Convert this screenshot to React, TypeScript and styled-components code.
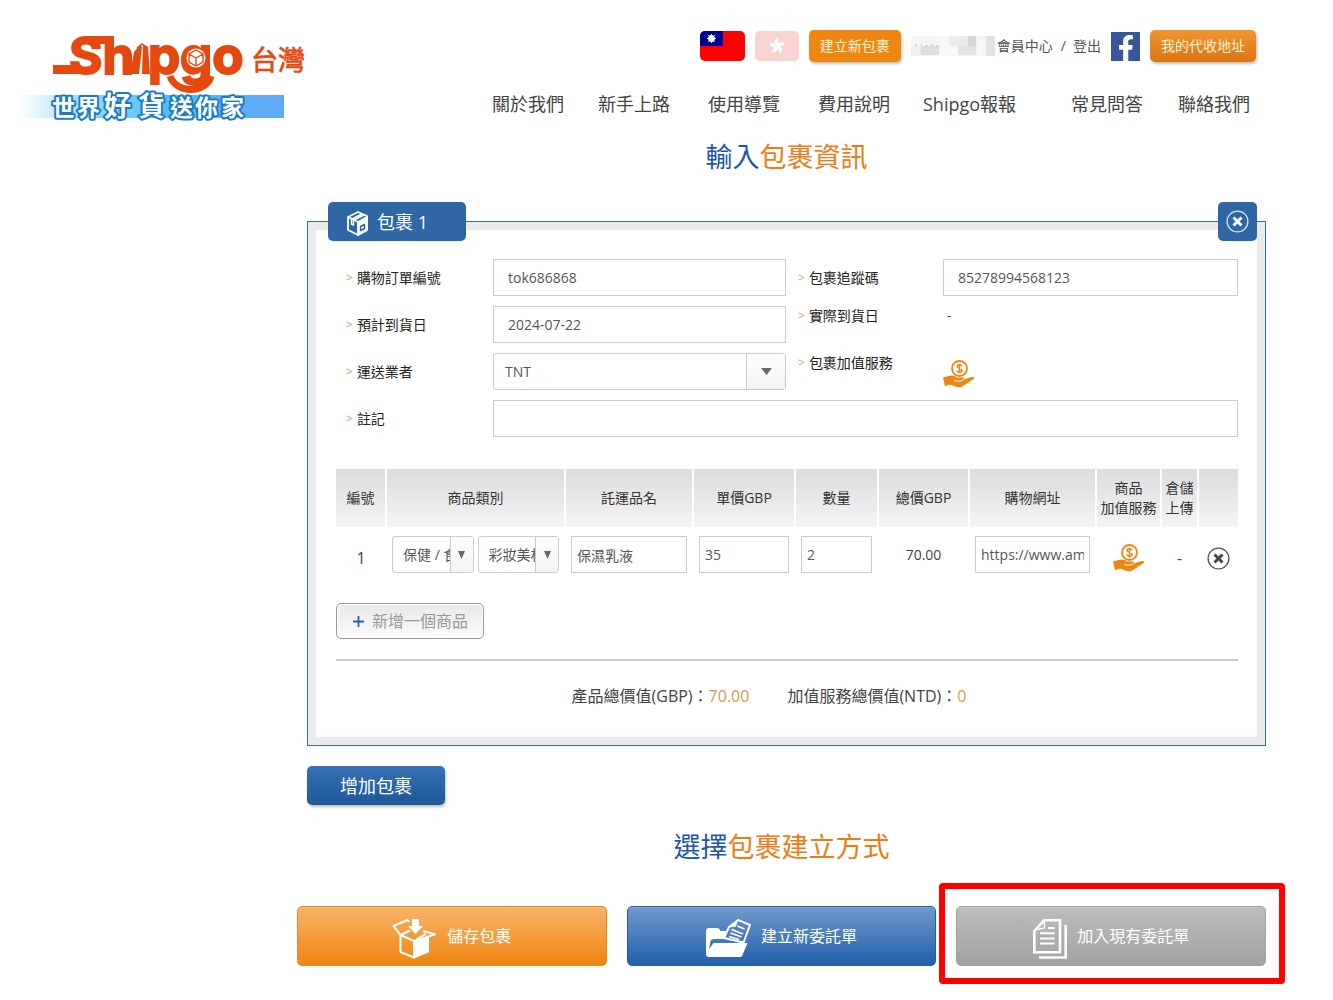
import React from "react";
import styled, { createGlobalStyle, css } from "styled-components";
import { FaFacebookF } from "react-icons/fa";

const GlobalStyle = createGlobalStyle`
  *, *::before, *::after { box-sizing: border-box; }
  body {
    margin: 0;
    background: #fff;
    color: #444;
    font-family: "Open Sans", "Noto Sans CJK TC", sans-serif;
    font-size: 14px;
    line-height: 20px;
  }
  button, input, select { font: inherit; margin: 0; }
  button { cursor: pointer; }
  a { color: inherit; text-decoration: none; }
  svg { display: block; }
`;

/* ---------- header ---------- */

const Header = styled.header`
  display: flex;
  align-items: flex-start;
  padding: 16px 77px 0 16px;
`;

const LogoLink = styled.a`
  flex: none;
`;

const HeaderSide = styled.div`
  flex: 1;
  display: flex;
  flex-direction: column;
  align-items: flex-end;
  gap: 30px;
  padding-top: 14px;
`;

const UserBar = styled.div`
  display: flex;
  align-items: center;
  gap: 10px;
  height: 32px;
`;

const FlagButton = styled.button`
  padding: 0;
  border: 0;
  background: none;
  border-radius: 5px;
  overflow: hidden;
`;

const PillLink = styled.a<{ $shaded?: boolean }>`
  padding: 6px 11px;
  border-radius: 5px;
  color: #fff4d8;
  background: ${(p) =>
    p.$shaded ? "linear-gradient(#ee9530, #da7612)" : "#ee8712"};
  box-shadow: 1px 2px 3px rgba(0, 0, 0, 0.25);
`;

const Account = styled.div`
  display: flex;
  align-items: center;
  color: #555;
`;

const AccountLink = styled.a`
  margin-left: 2px;
`;

const Slash = styled.span`
  padding: 0 5px 0 8px;
`;

const FacebookLink = styled.a`
  display: flex;
  align-items: flex-end;
  justify-content: flex-end;
  width: 29px;
  height: 29px;
  padding-right: 1px;
  overflow: hidden;
  color: #fff;
  background: #38569c;
`;

const Nav = styled.nav`
  display: grid;
  grid-template-columns: 106fr 110fr 110fr 105fr 148fr 107fr 72fr;
  width: 100%;
  max-width: 758px;
  margin-right: 6px;
  font-size: 18px;
  line-height: 24px;
  white-space: nowrap;
`;

/* ---------- main ---------- */

const Main = styled.main`
  margin: 0 67px 0 307px;
  padding-bottom: 30px;
`;

const Title = styled.h1`
  margin: 0;
  padding: 11px 0 44px;
  color: #1d57a5;
  font-size: 27px;
  font-weight: 400;
  line-height: 40px;
  text-align: center;
`;

const SubTitle = styled(Title).attrs({ as: "h2" })`
  padding: 22px 10px 39px 0;
`;

const Accent = styled.span`
  color: #ee7c14;
`;

const Panel = styled.section`
  position: relative;
  border: 1px solid #3070a8;
  background: #ebebec;
  padding: 8px;
`;

const PanelBody = styled.div`
  padding: 29px 19px 29px 20px;
  background: #fff;
`;

const tabLook = css`
  position: absolute;
  top: -20px;
  height: 39px;
  border-radius: 5px;
  color: #fff;
  background: #2e67a4;
`;

const PanelTab = styled.h3`
  ${tabLook}
  left: 20px;
  display: flex;
  align-items: center;
  gap: 9px;
  width: 138px;
  margin: 0;
  padding-left: 19px;
  font-size: 18px;
  font-weight: 400;

  svg { margin-top: 4px; }
`;

const PanelClose = styled.button`
  ${tabLook}
  right: 8px;
  display: grid;
  place-items: center;
  width: 39px;
  padding: 0;
  border: 0;
`;

const Fields = styled.div`
  display: grid;
  grid-template-columns: 147px 293fr 157px 295fr;
  grid-auto-rows: 37px;
  row-gap: 10px;
  align-items: center;
  margin-left: 10px;
`;

const labelLook = css<{ $second?: boolean; $top?: boolean }>`
  display: flex;
  gap: 4px;
  padding-left: ${(p) => (p.$second ? "12px" : "0")};
  align-self: ${(p) => (p.$top ? "start" : "center")};
  color: #222;

  &::before {
    content: ">";
    color: #d3a467;
    font-size: 12px;
  }
`;

const Label = styled.label<{ $second?: boolean; $top?: boolean }>`
  ${labelLook}
`;

const Caption = styled.div<{ $second?: boolean; $top?: boolean }>`
  ${labelLook}
`;

const TextBox = styled.input<{ $compact?: boolean; $wide?: boolean }>`
  width: 100%;
  height: 37px;
  padding: ${(p) => (p.$compact ? "0 5px" : "0 14px")};
  border: 1px solid #ccc;
  border-radius: 0;
  color: #555;
  background: #fff;
  outline: none;
  ${(p) => p.$wide && "grid-column: 2 / -1;"}
`;

const Plain = styled.div`
  align-self: start;
  padding-left: 4px;
`;

const IconButton = styled.button`
  align-self: start;
  justify-self: start;
  display: inline-block;
  vertical-align: middle;
  padding: 7px 0 0;
  border: 0;
  background: none;
`;

const SelectBox = styled.div<{ $compact?: boolean }>`
  position: relative;
  flex: 1;
  min-width: 0;
  height: 37px;
  border: 1px solid #ccc;
  border-radius: 3px;

  select {
    appearance: none;
    width: 100%;
    height: 100%;
    padding: ${(p) => (p.$compact ? "0 23px 0 10px" : "0 39px 0 11px")};
    border: 0;
    color: #555;
    background: none;
    outline: none;
    text-overflow: clip;
  }
`;

const SelectArrow = styled.span<{ $compact?: boolean }>`
  position: absolute;
  top: 0;
  right: 0;
  bottom: 0;
  display: grid;
  place-items: center;
  width: ${(p) => (p.$compact ? "23px" : "39px")};
  border-left: 1px solid #ccc;
  background: linear-gradient(#fff, #f3f3f3);
  pointer-events: none;
`;

const SelectPair = styled.div`
  display: flex;
  gap: 4px;
`;

const Items = styled.table`
  width: 100%;
  margin-top: 32px;
  border-collapse: collapse;
  table-layout: fixed;

  th {
    height: 58px;
    padding: 0;
    border-right: 2px solid #fff;
    color: #333;
    background: linear-gradient(#dcdcdc, #f4f4f4);
    font-weight: 400;
  }
  th:last-child { border-right: 0; }
  td {
    padding: 9px 6px;
    text-align: center;
    vertical-align: middle;
  }
`;

const RowNumber = styled.div`
  padding-top: 7px;
  font-size: 16px;
`;

const AddItem = styled.button`
  display: flex;
  align-items: center;
  gap: 8px;
  height: 36px;
  margin-top: 21px;
  padding: 0 15px 0 16px;
  border: 1px solid #999;
  border-radius: 5px;
  color: #999;
  background: linear-gradient(#e9e9e9, #fbfbfb);
  box-shadow: inset 0 0 0 1px #fff;
  font-size: 16px;
`;

const Totals = styled.div`
  display: flex;
  justify-content: center;
  gap: 38px;
  margin-top: 20px;
  padding: 23px 36px 0 0;
  border-top: 2px solid #ccc;
  font-size: 16px;
  line-height: 24px;
`;

const Amount = styled.span`
  color: #d69a4e;
`;

const AddPackage = styled.button`
  display: block;
  width: 138px;
  height: 39px;
  margin-top: 20px;
  padding: 0;
  border: 0;
  border-radius: 5px;
  color: #fff;
  background: linear-gradient(#3671b4, #1f5798);
  box-shadow: 1px 2px 3px rgba(0, 0, 0, 0.25);
  font-size: 18px;
`;

const Actions = styled.div`
  display: grid;
  grid-template-columns: repeat(3, 1fr);
  gap: 20px;
  margin-left: -10px;
`;

const tones = {
  orange: ["#ee8616", "#f8b36a", "#ef8611"],
  blue: ["#1f5cab", "#7099cb", "#225fab"],
  gray: ["#a2a2a2", "#bdbdbd", "#a2a2a2"],
};

const Action = styled.button<{ $tone: keyof typeof tones }>`
  display: flex;
  align-items: center;
  justify-content: center;
  gap: 10px;
  width: 100%;
  height: 60px;
  padding: 6px 0 0;
  border: 1px solid ${(p) => tones[p.$tone][0]};
  border-radius: 5px;
  color: #fff;
  background: linear-gradient(
    ${(p) => tones[p.$tone][1]},
    ${(p) => tones[p.$tone][2]}
  );
  box-shadow: inset 0 1px 0 rgba(255, 255, 255, 0.2);
  font-size: 16px;

  span { margin-top: -6px; }
`;

const Highlight = styled.div`
  position: relative;

  &::after {
    content: "";
    position: absolute;
    inset: -23px -19px -18px -17px;
    border: 6px solid #fe0000;
    border-radius: 4px;
    pointer-events: none;
  }
`;

/* ---------- drawings ---------- */

const Logo = () => (
  <svg width="292" height="110" viewBox="16 16 292 110" role="img" aria-label="Shipgo 台灣">
    <defs>
      <linearGradient id="sky" x1="0" x2="1" y1="0" y2="0">
        <stop offset="0" stopColor="#cdeffa" stopOpacity="0" />
        <stop offset="0.2" stopColor="#a5dff7" />
        <stop offset="0.55" stopColor="#52bdf2" />
        <stop offset="1" stopColor="#60a8f4" />
      </linearGradient>
    </defs>
    <g fill="#e5490f">
      <text x="69" y="74" fontFamily="Inter, sans-serif" fontSize="51" fontWeight="700" stroke="#e5490f" strokeWidth="2">
        Shipgo
      </text>
      <path d="M53 65h27v9H53zM86 36h24v8H86z" />
    </g>
    <path d="M132 32h15v43h-15z" fill="#fff" />
    <path d="M134 52l6-7 2 2-3 27h-9zM143 45l5 2 2 27h-8z" fill="#e5490f" />
    <path d="M137 48l5-4 6 4" fill="none" stroke="#e5490f" strokeWidth="1.500" />
    <path d="M170 76c6 18 36 18 41 0" fill="none" stroke="#e5490f" strokeWidth="7" />
    <circle cx="196" cy="58" r="9.500" fill="#fff" />
    <path d="M196 50l7 4v8l-7 4-7-4v-8zM189 54l7 4 7-4M196 58v8" fill="none" stroke="#e5490f" strokeWidth="1.400" />
    <text x="251" y="70" fill="#e5490f" stroke="#e5490f" strokeWidth="0.700" fontFamily="'Noto Sans CJK TC', sans-serif" fontSize="27">
      台灣
    </text>
    <rect x="16" y="95" width="268" height="23" fill="url(#sky)" />
    <g
      fill="#fff"
      stroke="#1a7bc4"
      strokeWidth="4"
      strokeLinejoin="round"
      paintOrder="stroke"
      fontFamily="'Noto Sans CJK TC', sans-serif"
      fontWeight="700"
      fontSize="23"
    >
      <text x="52" y="116">世</text>
      <text x="77" y="116">界</text>
      <text x="104" y="116" fontSize="27">好</text>
      <text x="138" y="116" fontSize="27">貨</text>
      <text x="170" y="116">送</text>
      <text x="195" y="116">你</text>
      <text x="221" y="116">家</text>
    </g>
  </svg>
);

const TaiwanFlag = () => (
  <svg width="45" height="30" viewBox="0 0 45 30">
    <rect width="45" height="30" fill="#fe0000" />
    <rect width="23" height="15" fill="#000095" />
    <path d="M11.500 3v9M7 7.500h9M8.300 4.300l6.400 6.400M14.700 4.300l-6.400 6.400" stroke="#fff" />
    <circle cx="11.500" cy="7.500" r="3.400" fill="#fff" />
  </svg>
);

const HongKongFlag = () => (
  <svg width="44" height="30" viewBox="0 0 44 30">
    <rect width="44" height="30" fill="#f9d3cf" />
    <g fill="#fff">
      {[0, 72, 144, 216, 288].map((turn) => (
        <path key={turn} transform={`rotate(${turn} 22 15)`} d="M22 15c-4-3-3-7 1-8 1.500 2-.8 3.500.6 4.500 1 1.600 0 2.500-1.600 3.500z" />
      ))}
    </g>
  </svg>
);

const MaskedName = () => (
  <svg width="84" height="20" viewBox="0 0 86 20" preserveAspectRatio="none" aria-hidden="true">
    <rect width="86" height="20" fill="#f5f5f5" />
    <rect x="0" y="10" width="10" height="10" fill="#f0f0f0" />
    <rect x="10" y="10" width="19" height="9" fill="#dedede" />
    <rect x="29" y="0" width="19" height="20" fill="#f8f8f8" />
    <rect x="39" y="0" width="19" height="10" fill="#ececec" />
    <rect x="48" y="10" width="19" height="9" fill="#e4e4e4" />
    <rect x="58" y="0" width="9" height="10" fill="#d8d8d8" />
    <rect x="67" y="0" width="10" height="20" fill="#f6f6f6" />
    <rect x="77" y="0" width="9" height="20" fill="#e2e2e2" />
    <path d="M4 9h2M10 9h1M15 10h2M21 9h2M26 10h2" stroke="#a8a8a8" />
  </svg>
);

const ParcelIcon = () => (
  <svg width="21" height="25" viewBox="0 0 21 25" fill="none" stroke="#fff" strokeWidth="1.800" strokeLinejoin="round">
    <path d="M1 6l10-5 9 4v14l-9 5-10-5z" />
    <path d="M11 11l9-5v13l-9 5z" fill="#fff" />
    <path d="M1 6l10 5M5 8l10-5M7 9l10-5" />
    <path d="M4.500 8v5l2 1V9" strokeWidth="1.400" />
    <path d="M13.500 15.500l4-2v4l-4 2z" fill="#fff" stroke="#2e67a4" strokeWidth="1.400" />
  </svg>
);

const CircleX = ({ color, cross }: { color: string; cross: string }) => (
  <svg width="23" height="23" viewBox="0 0 23 23" fill="none">
    <circle cx="11.500" cy="11.500" r="10.400" stroke={color} strokeWidth="1.300" />
    <path d="M7.500 7.500l8 8M15.500 7.500l-8 8" stroke={cross} strokeWidth="3" />
  </svg>
);

const ServiceIcon = () => (
  <svg width="32" height="28" viewBox="0 0 32 28">
    <circle cx="16.500" cy="8.500" r="7.500" fill="#fff" stroke="#ef8410" strokeWidth="1.800" />
    <path d="M19 6.300c-.4-2-4.700-2.100-4.800.1 0 2.500 4.900 1.400 4.900 4 0 2.300-4.700 2.300-5.100.1M16.600 3.500v10" fill="none" stroke="#ef8410" strokeWidth="1.500" />
    <path d="M0 17.500l7-1.700c3-.6 5 .4 7 1.700h5c2 0 2.600 1.300 1.600 2l8-2.400c1.800-.5 3.400.6 2 1.900L20 26c-2 1.400-5 1.600-7 .8L8 24.800c-2-.4-4 .2-6 1.500z" fill="#ef8410" />
    <path d="M11 20.300c3 1.400 6.500 1.200 10-.6" fill="none" stroke="#fff" strokeWidth="1" />
  </svg>
);

const Triangle = ({ compact }: { compact?: boolean }) => (
  <svg width={compact ? 7 : 11} height={compact ? 8 : 7} viewBox="0 0 10 8" preserveAspectRatio="none">
    <path d="M0 0h10L5 8z" fill="#666" />
  </svg>
);

const PlusIcon = () => (
  <svg width="11" height="11" viewBox="0 0 11 11">
    <path d="M5.500 0v11M0 5.500h11" stroke="#2e67a4" strokeWidth="1.800" />
  </svg>
);

const StoreIcon = () => (
  <svg width="45" height="40" viewBox="0 0 45 40" fill="none" stroke="#fff" strokeWidth="2" strokeLinejoin="round">
    <path d="M17 3l-1.500-2L1.500 7l7 9L22 22l5-2" />
    <path d="M8.500 16L18 11.500" />
    <path d="M8.500 16v17L22 38.500V22" />
    <path d="M22 23.500l4-1.500 1 .5 9-4.500V32.500L22 38.500z" fill="#fff" />
    <path d="M31 12l12 3.200L27 21l-2-1 9-5.200" />
    <path d="M20 0h7v7h4l-7.500 8L16 7h4z" fill="#fff" stroke="none" />
  </svg>
);

const FolderIcon = () => (
  <svg width="45" height="40" viewBox="0 0 45 40">
    <path d="M0 12c0-2 1-3 3-3h8c2 0 2.500 1 3.500 3H20l-3 8H8c-2 0-3 .7-3.500 2.500L3 30l4.500-6h34l-5 12c-.6 1.500-1.400 2-3 2H3c-2 0-3-1-3-3z" fill="#fff" />
    <path d="M32 1l12 5-6.500 17.500L18 19l5-11z" fill="none" stroke="#fff" strokeWidth="2" strokeLinejoin="round" />
    <path d="M32 1l-10 7.500 8-1z" fill="#fff" />
    <path d="M31.500 7l7 3M25.500 10.500l11.500 4.500M24.500 14l11 4M23 17.500l10 3" stroke="#fff" strokeWidth="1.700" />
  </svg>
);

const PagesIcon = () => (
  <svg width="34" height="40" viewBox="0 0 34 40" fill="none" stroke="#fff" strokeWidth="2.600">
    <path d="M1.300 12L11 1.300h16v32H1.300z" />
    <path d="M11.500 2v7l-9 2z" strokeWidth="1.500" />
    <path d="M15 9h6.500M7 14.300h14.500M7 19.500h14.500M7 24.500h14.500" strokeWidth="2" />
    <path d="M32.700 6v32.500H6" />
  </svg>
);

/* ---------- page ---------- */

const navLinks = ["關於我們", "新手上路", "使用導覽", "費用說明", "Shipgo報報", "常見問答", "聯絡我們"];

const columns: { width: number; title: React.ReactNode }[] = [
  { width: 50, title: "編號" },
  { width: 179, title: "商品類別" },
  { width: 128, title: "託運品名" },
  { width: 102, title: "單價GBP" },
  { width: 83, title: "數量" },
  { width: 91, title: "總價GBP" },
  { width: 127, title: "購物網址" },
  { width: 65, title: <>商品<br />加值服務</> },
  { width: 37, title: <>倉儲<br />上傳</> },
  { width: 40, title: "" },
];

type DropDownProps = { id?: string; label?: string; value: string; compact?: boolean };

const DropDown = ({ id, label, value, compact }: DropDownProps) => (
  <SelectBox $compact={compact}>
    <select id={id} aria-label={label} defaultValue={value}>
      <option>{value}</option>
    </select>
    <SelectArrow $compact={compact}>
      <Triangle compact={compact} />
    </SelectArrow>
  </SelectBox>
);

export default function App() {
  return (
    <>
      <GlobalStyle />
      <Header>
        <LogoLink href="#home">
          <Logo />
        </LogoLink>
        <HeaderSide>
          <UserBar>
            <FlagButton aria-label="台灣"><TaiwanFlag /></FlagButton>
            <FlagButton aria-label="香港"><HongKongFlag /></FlagButton>
            <PillLink href="#new">建立新包裹</PillLink>
            <Account>
              <MaskedName />
              <AccountLink href="#member">會員中心</AccountLink>
              <Slash>/</Slash>
              <AccountLink href="#logout">登出</AccountLink>
            </Account>
            <FacebookLink href="#facebook" aria-label="Facebook">
              <FaFacebookF size={26} />
            </FacebookLink>
            <PillLink href="#address" $shaded>我的代收地址</PillLink>
          </UserBar>
          <Nav>
            {navLinks.map((name) => (
              <a key={name} href="#nav">{name}</a>
            ))}
          </Nav>
        </HeaderSide>
      </Header>

      <Main>
        <Title>輸入<Accent>包裹資訊</Accent></Title>

        <Panel>
          <PanelTab><ParcelIcon />包裹 1</PanelTab>
          <PanelClose aria-label="移除包裹"><CircleX color="#d5e6f7" cross="#fff" /></PanelClose>
          <PanelBody>
            <Fields>
              <Label htmlFor="order">購物訂單編號</Label>
              <TextBox id="order" defaultValue="tok686868" />
              <Label htmlFor="tracking" $second>包裹追蹤碼</Label>
              <TextBox id="tracking" defaultValue="85278994568123" />

              <Label htmlFor="eta">預計到貨日</Label>
              <TextBox id="eta" defaultValue="2024-07-22" />
              <Caption $second $top>實際到貨日</Caption>
              <Plain>-</Plain>

              <Label htmlFor="carrier">運送業者</Label>
              <DropDown id="carrier" value="TNT" />
              <Caption $second $top>包裹加值服務</Caption>
              <IconButton aria-label="包裹加值服務"><ServiceIcon /></IconButton>

              <Label htmlFor="note">註記</Label>
              <TextBox id="note" $wide />
            </Fields>

            <Items>
              <colgroup>
                {columns.map((c, i) => <col key={i} width={c.width} />)}
              </colgroup>
              <thead>
                <tr>{columns.map((c, i) => <th key={i} scope="col">{c.title}</th>)}</tr>
              </thead>
              <tbody>
                <tr>
                  <td><RowNumber>1</RowNumber></td>
                  <td>
                    <SelectPair>
                      <DropDown compact label="商品類別" value="保健 / 食品" />
                      <DropDown compact label="商品子類別" value="彩妝美材" />
                    </SelectPair>
                  </td>
                  <td><TextBox $compact aria-label="託運品名" defaultValue="保濕乳液" /></td>
                  <td><TextBox $compact aria-label="單價GBP" defaultValue="35" /></td>
                  <td><TextBox $compact aria-label="數量" defaultValue="2" /></td>
                  <td>70.00</td>
                  <td><TextBox $compact aria-label="購物網址" defaultValue="https://www.am" /></td>
                  <td><IconButton aria-label="商品加值服務"><ServiceIcon /></IconButton></td>
                  <td><RowNumber>-</RowNumber></td>
                  <td><IconButton aria-label="刪除商品"><CircleX color="#555" cross="#444" /></IconButton></td>
                </tr>
              </tbody>
            </Items>

            <AddItem><PlusIcon />新增一個商品</AddItem>

            <Totals>
              <div>產品總價值(GBP)：<Amount>70.00</Amount></div>
              <div>加值服務總價值(NTD)：<Amount>0</Amount></div>
            </Totals>
          </PanelBody>
        </Panel>

        <AddPackage>增加包裹</AddPackage>

        <SubTitle>選擇<Accent>包裹建立方式</Accent></SubTitle>

        <Actions>
          <Action $tone="orange"><StoreIcon /><span>儲存包裹</span></Action>
          <Action $tone="blue"><FolderIcon /><span>建立新委託單</span></Action>
          <Highlight>
            <Action $tone="gray"><PagesIcon /><span>加入現有委託單</span></Action>
          </Highlight>
        </Actions>
      </Main>
    </>
  );
}
